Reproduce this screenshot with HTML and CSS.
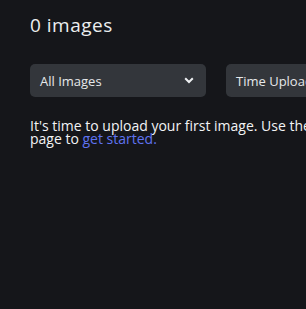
FILE: index.html
```html
<!DOCTYPE html>
<html lang="en">

<head>
    <meta charset="UTF-8">
    <meta name="viewport" content="width=device-width, initial-scale=1.0">
    <title>Images</title>
    <link rel="stylesheet" href="styles.css">
</head>

<body>
    <div class="page">
        <h1 class="title">0 images</h1>
        <div class="filters">
            <div class="select wide">
                <span>All Images</span>
                <svg class="chev" width="10" height="7" viewBox="0 0 10 7">
                    <path d="M1.2 1.2 L5 5 L8.8 1.2" fill="none" stroke="#eef0f2" stroke-width="2" />
                </svg>
            </div>
            <div class="select">
                <span>Time Uploaded</span>
            </div>
        </div>
        <p class="empty">It's time to upload your first image. Use the upload button at the top of this<br>page to <a href="#">get started.</a></p>
    </div>
</body>

</html>
```

FILE: styles.css
```css
html, body {
    margin: 0;
    background: #15161a;
    overflow: hidden;
}

.page {
    padding: 12px 30px;
    font-family: "Open Sans", sans-serif;
    color: #eceef0;
    width: 600px;
}

.title {
    margin: 0;
    font-size: 19px;
    font-weight: 400;
    letter-spacing: 0.5px;
    line-height: 26px;
}

.filters {
    display: flex;
    gap: 20px;
    margin-top: 26px;
}

.select {
    display: flex;
    align-items: center;
    justify-content: space-between;
    box-sizing: border-box;
    height: 33px;
    width: 176px;
    padding: 0 12px 0 10px;
    background: #33363b;
    border-radius: 5px;
    font-size: 13px;
    color: #e6e8ea;
    flex-shrink: 0;
}

.empty {
    margin: 22px 0 0;
    font-size: 14px;
    line-height: 13px;
    color: #f2f3f5;
    white-space: nowrap;
}

.empty a {
    color: #5f73f0;
    text-decoration: none;
}
```
